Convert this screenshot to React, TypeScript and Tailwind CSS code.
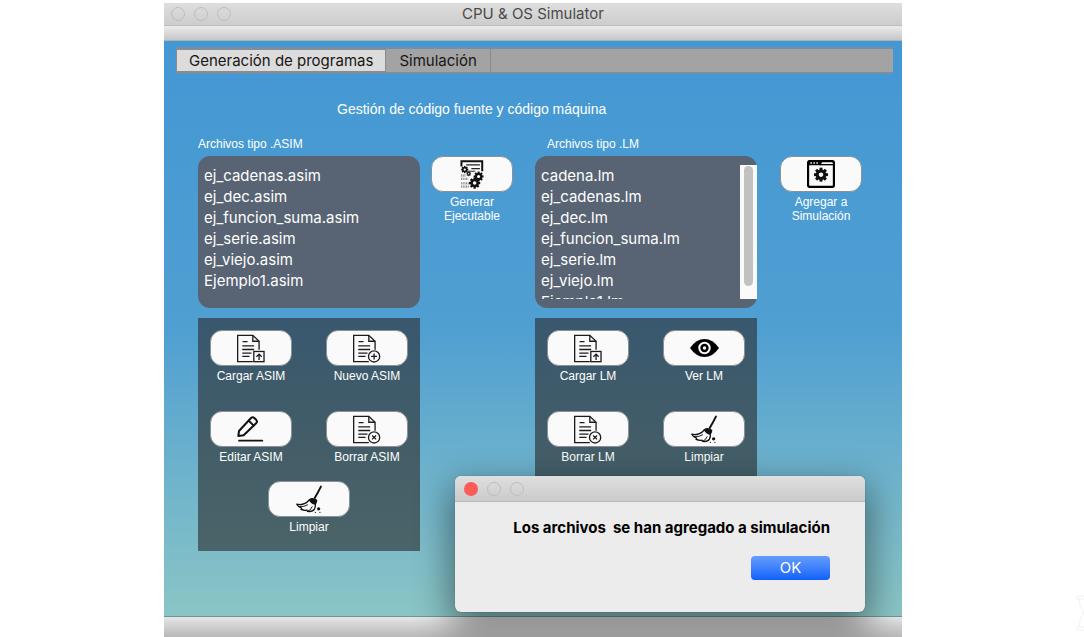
import type { ReactNode } from "react";

type Action = { label: string; icon: ReactNode };

function Page({ children }: { children: ReactNode }) {
  return (
    <svg aria-hidden="true" viewBox="0 -2 88 88" className="size-[29px]" fill="none" stroke="#1c1c1c" strokeWidth="4">
      <path d="M67 46V20L48 2H2V82H48" />
      <path d="M48 2V20H67" />
      <path d="M17 21H32M16 34H52M16 45H52M16 56H44M16 66H38" />
      {children}
    </svg>
  );
}

function UploadIcon() {
  return (
    <Page>
      <rect x="51" y="51" width="31" height="31" fill="#fafafa" />
      <path d="M67 77V59M59 67L67 59L75 67" />
    </Page>
  );
}

function AddIcon() {
  return (
    <Page>
      <circle cx="64" cy="66" r="17" fill="#fafafa" />
      <path d="M64 57V75M55 66H73" />
    </Page>
  );
}

function RemoveIcon() {
  return (
    <Page>
      <circle cx="64" cy="66" r="17" fill="#fafafa" />
      <path d="M58 60L70 72M70 60L58 72" />
    </Page>
  );
}

function PencilIcon() {
  return (
    <svg aria-hidden="true" viewBox="0 0 84 84" className="size-7" fill="none" stroke="#111" strokeWidth="6" strokeLinejoin="round" strokeLinecap="round">
      <path d="M4 63L6 48L42 9Q47 5 52 9L58 15Q62 20 58 24L20 61Z" />
      <path d="M35 17L50 32" />
      <path d="M6 77H76" strokeWidth="5" />
    </svg>
  );
}

function BroomIcon() {
  return (
    <svg aria-hidden="true" viewBox="0 0 88 92" className="h-[30px] w-[29px]" fill="none" stroke="#111" strokeWidth="4" strokeLinejoin="round" strokeLinecap="round">
      <path d="M79 8Q70 26 60 43" strokeWidth="6" />
      <path d="M44 48Q53 41 66 50Q65 58 61 62Q50 60 44 48Z" fill="#111" />
      <path d="M43 49Q28 67 5 62Q10 72 20 74L18 78Q28 82 36 80L38 84Q54 86 59 77Q63 69 62 61" />
      <path d="M13 69Q28 71 38 64" strokeWidth="3" />
      <path d="M40 83Q48 80 52 70" strokeWidth="3" />
      <circle cx="72" cy="76" r="5" fill="#111" stroke="none" />
      <circle cx="62" cy="87" r="2" fill="#111" stroke="none" />
      <circle cx="76" cy="87" r="2" fill="#111" stroke="none" />
    </svg>
  );
}

function EyeIcon() {
  return (
    <svg aria-hidden="true" viewBox="0 0 84 52" className="h-[18px] w-[29px]">
      <path d="M0 26Q18 0 42 0T84 26Q66 52 42 52T0 26Z" fill="#000" />
      <circle cx="42" cy="26" r="15" fill="none" stroke="#fafafa" strokeWidth="6" />
      <circle cx="42" cy="26" r="5" fill="#fafafa" />
    </svg>
  );
}

function Gear({ x, y, r }: { x: number; y: number; r: number }) {
  const angles = [0, 45, 90, 135];
  return (
    <g transform={`translate(${x} ${y})`} stroke="#111">
      {angles.map((a) => (
        <path key={a} d={`M0 ${-r}V${r}`} transform={`rotate(${a})`} strokeWidth={r * 0.42} />
      ))}
      <circle r={r * 0.54} fill="#fafafa" strokeWidth={r * 0.44} />
    </g>
  );
}

function GenerateIcon() {
  return (
    <svg aria-hidden="true" viewBox="0 0 72 88" className="h-[29px] w-6" fill="none">
      <path d="M4 20V4H67V34" stroke="#111" strokeWidth="6" />
      <path d="M18 15H60M34 26H60" stroke="#222" strokeWidth="4" />
      <path d="M24 34H46" stroke="#222" strokeWidth="3" />
      <Gear x={14} y={29} r={11} />
      <Gear x={26} y={42} r={7} />
      <path d="M3 47H16M3 57H24M3 71H26M3 81H26" stroke="#888" strokeWidth="7" strokeDasharray="3 2" />
      <Gear x={56} y={50} r={15} />
      <Gear x={44} y={70} r={17} />
    </svg>
  );
}

function AddToSimulationIcon() {
  return (
    <svg aria-hidden="true" viewBox="0 0 84 84" className="size-7" fill="none">
      <rect x="3" y="3" width="78" height="78" rx="7" stroke="#000" strokeWidth="7" />
      <path d="M4 5H46L40 16H4Z" fill="#000" />
      <path d="M38 14H80" stroke="#000" strokeWidth="4" />
      <path d="M10 9H34" stroke="#ddd" strokeWidth="4" strokeDasharray="5 4" />
      <Gear x={42} y={44} r={21} />
    </svg>
  );
}

function ActionButton({ label, icon }: Action) {
  return (
    <label className="flex w-[82px] flex-col items-center gap-[3px] text-center text-[12px] leading-[14px] text-white">
      <button
        type="button"
        className="flex h-9 w-full items-center justify-center rounded-xl border border-[#8a9196] bg-[#fafafa]"
      >
        {icon}
      </button>
      <span>{label}</span>
    </label>
  );
}

function FileList({ files, scroll = false }: { files: string[]; scroll?: boolean }) {
  return (
    <div className="flex h-[152px] rounded-xl bg-[#586473] py-[9px]">
      <ul className="flex-1 overflow-hidden pl-[6px] font-[Inter,sans-serif] text-[15px] leading-[21px] text-white">
        {files.map((file) => (
          <li key={file}>{file}</li>
        ))}
      </ul>
      {scroll && (
        <div className="flex w-[17px] justify-center bg-[#fafafa] pt-px">
          <div className="h-[120px] w-[9px] rounded-full bg-[#c1c1c1]" />
        </div>
      )}
    </div>
  );
}

const asimFiles = [
  "ej_cadenas.asim",
  "ej_dec.asim",
  "ej_funcion_suma.asim",
  "ej_serie.asim",
  "ej_viejo.asim",
  "Ejemplo1.asim",
];
const lmFiles = [
  "cadena.lm",
  "ej_cadenas.lm",
  "ej_dec.lm",
  "ej_funcion_suma.lm",
  "ej_serie.lm",
  "ej_viejo.lm",
  "Ejemplo1.lm",
];
const asimActions: Action[] = [
  { label: "Cargar ASIM", icon: <UploadIcon /> },
  { label: "Nuevo ASIM", icon: <AddIcon /> },
  { label: "Editar ASIM", icon: <PencilIcon /> },
  { label: "Borrar ASIM", icon: <RemoveIcon /> },
];
const lmActions: Action[] = [
  { label: "Cargar LM", icon: <UploadIcon /> },
  { label: "Ver LM", icon: <EyeIcon /> },
  { label: "Borrar LM", icon: <RemoveIcon /> },
  { label: "Limpiar", icon: <BroomIcon /> },
];

function ActionPanel({ actions, children }: { actions: Action[]; children?: ReactNode }) {
  return (
    <div className="mt-[10px] flex h-[233px] flex-col items-center gap-[17px] bg-linear-to-b from-[#39586f] via-[#425d68] to-[#4b6469] p-3">
      <div className="grid w-full grid-cols-2 gap-y-7">
        {actions.map((action, i) => (
          <div key={action.label} className={i % 2 ? "flex justify-end" : "flex"}>
            <ActionButton {...action} />
          </div>
        ))}
      </div>
      {children}
    </div>
  );
}

function Lights({ active = false }: { active?: boolean }) {
  return (
    <div className="flex gap-[9px]">
      <span className={active ? "size-[14px] rounded-full bg-[#fc5b57]" : "size-[14px] rounded-full border border-[#bdbdbd]"} />
      <span className="size-[14px] rounded-full border border-[#bdbdbd]" />
      <span className="size-[14px] rounded-full border border-[#bdbdbd]" />
    </div>
  );
}

export default function App() {
  return (
    <div className="relative flex min-h-screen overflow-hidden bg-white pt-[3px] pr-[182px] pl-[164px] font-['Liberation_Sans',Arial,sans-serif]">
      <main className="relative flex flex-1 flex-col overflow-hidden">
        <header className="grid h-[23px] grid-cols-[1fr_auto_1fr] items-center border-b border-[#bdbdbd] bg-linear-to-b from-[#dedede] to-[#cdcdcd] px-[7px]">
          <Lights />
          <h1 className="font-[Inter,sans-serif] text-[15px] leading-5 text-[#4a4a4a]">CPU &amp; OS Simulator</h1>
        </header>
        <div className="h-[15px] border-b border-[#a9b3ba] bg-linear-to-b from-[#ececec] to-[#c6c6c6]" />

        <section className="flex-1 bg-linear-to-b from-[#4397d3] via-[#509fd2] to-[#8ac5c5] pt-[6px] pr-[9px] pl-3">
          <div role="tablist" className="flex h-[27px] border-t-2 border-b-2 border-[#7590a5] bg-[#a3a3a3] font-[Inter,sans-serif] text-[15px] leading-[22px] text-[#161616]">
            <button type="button" role="tab" aria-selected="true" className="border border-[#8c8c8c] bg-[#dcdcdc] px-3 leading-5">
              Generación de programas
            </button>
            <button type="button" role="tab" aria-selected="false" className="border-r border-[#8c8c8c] px-[13px]">
              Simulación
            </button>
          </div>

          <div className="pr-[31px] pl-[22px]">
            <h2 className="mt-[26px] pl-[139px] text-[14px] leading-[18px] text-white">
              Gestión de código fuente y código máquina
            </h2>
            <div className="mt-[18px] flex items-start">
              <div className="min-w-0 flex-1">
                <h3 className="mb-1 text-[12px] leading-4 text-white">Archivos tipo .ASIM</h3>
                <FileList files={asimFiles} />
                <ActionPanel actions={asimActions}>
                  <ActionButton label="Limpiar" icon={<BroomIcon />} />
                </ActionPanel>
              </div>
              <div className="mt-5 ml-[11px]">
                <ActionButton label="Generar Ejecutable" icon={<GenerateIcon />} />
              </div>
              <div className="ml-[22px] min-w-0 flex-1">
                <h3 className="mb-1 pl-3 text-[12px] leading-4 text-white">Archivos tipo .LM</h3>
                <FileList files={lmFiles} scroll />
                <ActionPanel actions={lmActions} />
              </div>
              <div className="mt-5 ml-[23px]">
                <ActionButton label="Agregar a Simulación" icon={<AddToSimulationIcon />} />
              </div>
            </div>
          </div>
        </section>
        <footer className="h-[21px] border-t border-[#6f9497] bg-linear-to-b from-[#e6e6e6] to-[#b9b7b8]" />

        <div
          role="dialog"
          aria-labelledby="dialog-message"
          className="absolute top-[473px] left-[291px] w-[410px] overflow-hidden rounded-md bg-[#ececec] shadow-[0_14px_36px_4px_rgba(0,0,0,0.45),0_0_1px_rgba(0,0,0,0.5)]"
        >
          <div className="flex h-[26px] items-center border-b border-[#bababa] bg-linear-to-b from-[#dfdfdf] to-[#cbcbcb] pl-[9px]">
            <Lights active />
          </div>
          <div className="flex flex-col items-end gap-[18px] pt-4 pr-[35px] pb-8 font-[Inter,sans-serif]">
            <p id="dialog-message" className="text-[15px] leading-5 font-bold whitespace-pre text-black">
              {"Los archivos  se han agregado a simulación"}
            </p>
            <button type="button" className="h-6 w-[79px] rounded-[4px] bg-linear-to-b from-[#659dfb] to-[#0e60fb] text-[15px] leading-6 text-white">
              OK
            </button>
          </div>
        </div>
      </main>
      <svg aria-hidden="true" viewBox="0 0 8 36" className="absolute right-0 bottom-[6px] h-9 w-2" fill="none" stroke="#f1f1f1">
        <path d="M8 1H1V4H8M3 4Q3 12 8 17Q3 24 3 32M8 32H1V35H8" />
      </svg>
    </div>
  );
}
